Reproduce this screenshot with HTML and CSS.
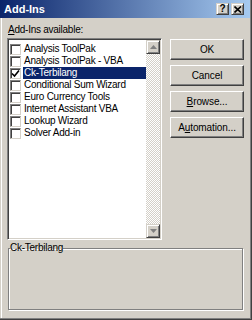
FILE: index.html
```html
<!DOCTYPE html>
<html lang="en">
<head>
    <meta charset="UTF-8">
    <title>Add-Ins</title>
    <link rel="stylesheet" href="styles.css">
</head>
<body>
    <div class="dialog">
        <!-- Title bar -->
        <div class="titlebar">
            <span class="title">Add-Ins</span>
            <div class="caption-buttons">
                <button class="caption-btn">?</button>
                <button class="caption-btn close-btn">
                    <svg width="8" height="7" viewBox="0 0 8 7"><path d="M0.5 0.5 L7 6.5 M7 0.5 L0.5 6.5" stroke="#000" stroke-width="1.6"/></svg>
                </button>
            </div>
        </div>

        <div class="content">
            <div class="main">
                <div class="list-col">
                    <div class="list-label"><u>A</u>dd-Ins available:</div>
                    <div class="listbox">
                        <ul class="items">
                            <li class="item"><span class="check"></span><span class="item-label">Analysis ToolPak</span></li>
                            <li class="item"><span class="check"></span><span class="item-label">Analysis ToolPak - VBA</span></li>
                            <li class="item selected">
                                <span class="check">
                                    <svg width="9" height="9" viewBox="0 0 9 9"><path d="M1 4.5 L3.5 7 L8 1.5" fill="none" stroke="#000" stroke-width="1.6"/></svg>
                                </span>
                                <span class="item-label">Ck-Terbilang</span>
                            </li>
                            <li class="item"><span class="check"></span><span class="item-label">Conditional Sum Wizard</span></li>
                            <li class="item"><span class="check"></span><span class="item-label">Euro Currency Tools</span></li>
                            <li class="item"><span class="check"></span><span class="item-label">Internet Assistant VBA</span></li>
                            <li class="item"><span class="check"></span><span class="item-label">Lookup Wizard</span></li>
                            <li class="item"><span class="check"></span><span class="item-label">Solver Add-in</span></li>
                        </ul>
                        <div class="scrollbar">
                            <div class="scroll-btn">
                                <svg width="7" height="4" viewBox="0 0 7 4"><path d="M3.5 0 L7 4 L0 4 Z" fill="#808080"/></svg>
                            </div>
                            <div class="scroll-track"></div>
                            <div class="scroll-btn">
                                <svg width="7" height="4" viewBox="0 0 7 4"><path d="M0 0 L7 0 L3.5 4 Z" fill="#808080"/></svg>
                            </div>
                        </div>
                    </div>
                </div>

                <div class="button-col">
                    <button class="btn">OK</button>
                    <button class="btn">Cancel</button>
                    <button class="btn"><u>B</u>rowse...</button>
                    <button class="btn">A<u>u</u>tomation...</button>
                </div>
            </div>

            <fieldset class="group">
                <legend class="group-title">Ck-Terbilang</legend>
            </fieldset>
        </div>
    </div>
</body>
</html>
```

FILE: styles.css
```css
* {
    box-sizing: border-box;
    margin: 0;
    padding: 0;
    font-family: 'Liberation Sans', Arial, sans-serif;
}

body {
    background-color: #d4d0c8;
}

.dialog {
    width: 252px;
    height: 320px;
    background-color: #d4d0c8;
    border-right: 1px solid #404040;
    border-bottom: 1px solid #404040;
    box-shadow: inset -1px -1px 0 #808080, inset 1px 0 0 #d4d0c8, inset 2px 0 0 #ffffff;
    font-size: 10px;
    letter-spacing: -0.25px;
    color: #000000;
}

/* Title bar */
.titlebar {
    height: 18px;
    margin-right: 1px;
    display: flex;
    justify-content: space-between;
    align-items: center;
    padding: 0 6px 0 4px;
    background: linear-gradient(to right, #0a246a, #a6caf0);
}

.title {
    color: #ffffff;
    font-weight: bold;
    font-size: 11px;
    letter-spacing: 0;
}

.caption-buttons {
    display: flex;
    gap: 2px;
}

.caption-btn {
    width: 13px;
    height: 12px;
    display: flex;
    justify-content: center;
    align-items: center;
    background-color: #d4d0c8;
    border: 1px solid;
    border-color: #d4d0c8 #404040 #404040 #d4d0c8;
    box-shadow: inset 1px 1px 0 #ffffff, inset -1px -1px 0 #808080;
    font-weight: bold;
    font-size: 10px;
    line-height: 10px;
    letter-spacing: 0;
}

/* Content */
.content {
    padding: 6px 7px 0 7px;
}

.main {
    display: flex;
    gap: 8px;
}

.list-col {
    width: 155px;
}

.list-label {
    margin-left: 1px;
    line-height: 12px;
    height: 14px;
}

.listbox {
    height: 202px;
    display: flex;
    background-color: #ffffff;
    border: 1px solid;
    border-color: #808080 #ffffff #ffffff #808080;
    box-shadow: inset 1px 1px 0 #404040, inset -1px -1px 0 #d4d0c8;
    padding: 1px;
}

.items {
    list-style: none;
    flex: 1;
    padding-top: 3px;
}

.item {
    display: flex;
    align-items: center;
    height: 12px;
    padding-left: 1px;
}

.check {
    width: 11px;
    height: 11px;
    margin-right: 2px;
    display: flex;
    justify-content: center;
    align-items: center;
    background-color: #ffffff;
    border: 1px solid;
    border-color: #808080 #d4d0c8 #d4d0c8 #808080;
    box-shadow: inset 1px 1px 0 #404040;
}

.item-label {
    flex: 1;
    height: 12px;
    line-height: 12px;
    padding-left: 1px;
    white-space: nowrap;
}

.selected .item-label {
    background-color: #0a246a;
    color: #ffffff;
}

.scrollbar {
    width: 14px;
    display: flex;
    flex-direction: column;
}

.scroll-btn {
    height: 14px;
    display: flex;
    justify-content: center;
    align-items: center;
    background-color: #d4d0c8;
    border: 1px solid;
    border-color: #d4d0c8 #404040 #404040 #d4d0c8;
    box-shadow: inset 1px 1px 0 #ffffff, inset -1px -1px 0 #808080;
}

.scroll-track {
    flex: 1;
    background: repeating-conic-gradient(#d4d0c8 0 25%, #ffffff 0 50%) 0 0 / 2px 2px;
}

/* Buttons */
.button-col {
    width: 74px;
    padding-top: 15px;
    display: flex;
    flex-direction: column;
    gap: 5px;
}

.btn {
    height: 21px;
    background-color: #d4d0c8;
    border: 1px solid;
    border-color: #ffffff #404040 #404040 #ffffff;
    box-shadow: inset -1px -1px 0 #808080;
    font-size: 10px;
    letter-spacing: -0.1px;
    color: #000000;
}

/* Group box */
.group {
    margin: 2px 0 0 1px;
    width: 235px;
    height: 68px;
    border: 1px solid #808080;
    box-shadow: 1px 1px 0 #ffffff, inset 1px 1px 0 #ffffff;
    padding: 0 0 0 1px;
}

.group-title {
    line-height: 12px;
    padding: 0;
}
```
